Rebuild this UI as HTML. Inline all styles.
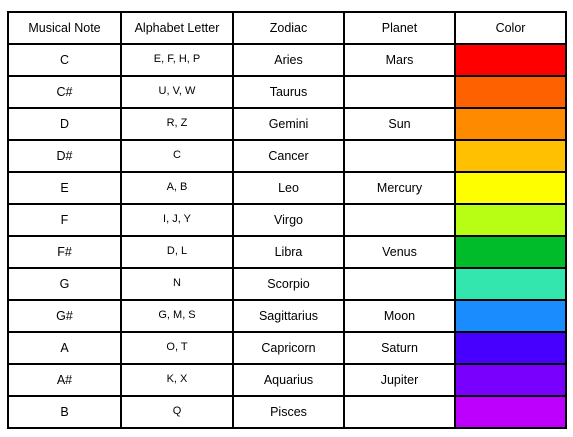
<!DOCTYPE html><html><head><style>
body{margin:0;width:573px;height:437px;background:#fff;font-family:"Liberation Sans",Arial,sans-serif;color:#000;position:relative}
.g{position:absolute;left:7px;top:11px;display:grid;grid-template-columns:111px 110px 109px 109px 109px;grid-auto-rows:30px;gap:2px;padding:2px;background:#000}
.g div{background:#fff;display:flex;align-items:center;justify-content:center;font-size:12.5px;box-sizing:border-box}
.g div.l{font-size:11px;padding-bottom:2px}
</style></head><body>
<div class="g">
<div>Musical Note</div><div>Alphabet Letter</div><div>Zodiac</div><div>Planet</div><div>Color</div>
<div>C</div><div class="l">E, F, H, P</div><div>Aries</div><div>Mars</div><div style="background:#fe0000"></div>
<div>C#</div><div class="l">U, V, W</div><div>Taurus</div><div></div><div style="background:#fe6100"></div>
<div>D</div><div class="l">R, Z</div><div>Gemini</div><div>Sun</div><div style="background:#fe8a00"></div>
<div>D#</div><div class="l">C</div><div>Cancer</div><div></div><div style="background:#fec000"></div>
<div>E</div><div class="l">A, B</div><div>Leo</div><div>Mercury</div><div style="background:#fefe00"></div>
<div>F</div><div class="l">I, J, Y</div><div>Virgo</div><div></div><div style="background:#b8fe14"></div>
<div>F#</div><div class="l">D, L</div><div>Libra</div><div>Venus</div><div style="background:#00bb2a"></div>
<div>G</div><div class="l">N</div><div>Scorpio</div><div></div><div style="background:#33e6ad"></div>
<div>G#</div><div class="l">G, M, S</div><div>Sagittarius</div><div>Moon</div><div style="background:#1a8cfe"></div>
<div>A</div><div class="l">O, T</div><div>Capricorn</div><div>Saturn</div><div style="background:#4700fe"></div>
<div>A#</div><div class="l">K, X</div><div>Aquarius</div><div>Jupiter</div><div style="background:#7a00fe"></div>
<div>B</div><div class="l">Q</div><div>Pisces</div><div></div><div style="background:#bd00fe"></div>
</div>
</body></html>
